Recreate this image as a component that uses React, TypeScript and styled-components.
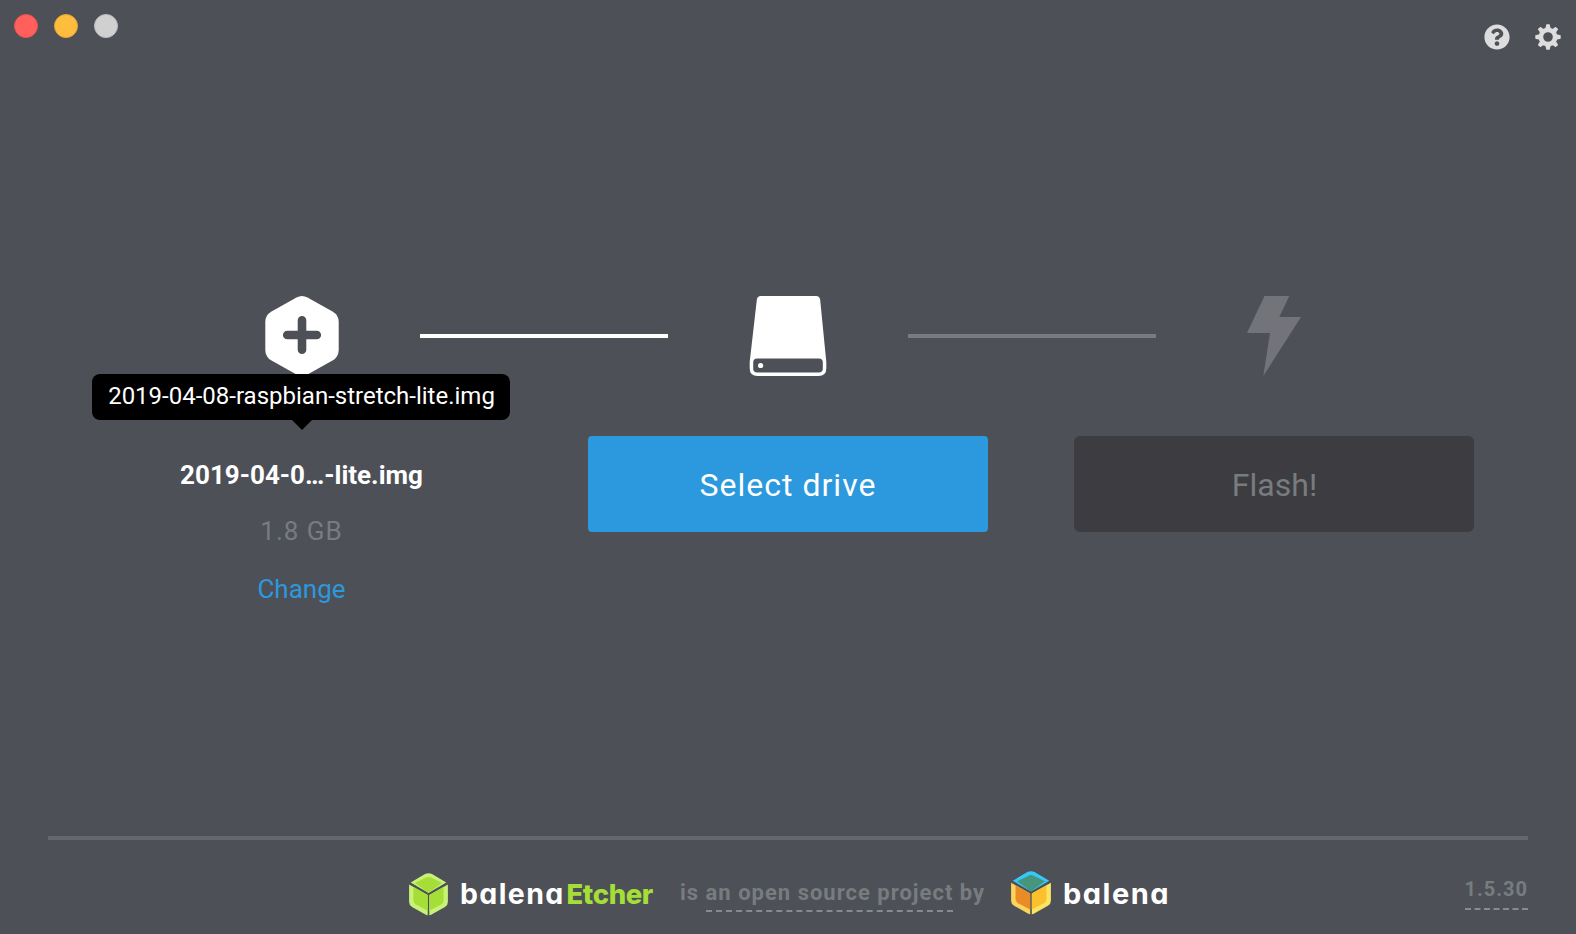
import React from "react";
import styled, { createGlobalStyle } from "styled-components";
import { FaQuestionCircle } from "react-icons/fa";

const GlobalStyle = createGlobalStyle`
  * { box-sizing: border-box; }
  body { margin: 0; background: #4d5057; }
`;

const Window = styled.div`
  width: 1576px;
  height: 934px;
  overflow: hidden;
  display: flex;
  flex-direction: column;
  background: #4d5057;
  color: #fff;
  font-family: Roboto, "Liberation Sans", sans-serif;
`;

const TitleBar = styled.header`
  height: 296px;
  display: flex;
  justify-content: space-between;
  align-items: flex-start;
  padding: 14px 15px 0 14px;
`;

const TrafficLights = styled.div`
  display: flex;
  gap: 16px;
`;

const Light = styled.span<{ $fill: string; $edge: string }>`
  width: 24px;
  height: 24px;
  border-radius: 50%;
  background: ${(p) => p.$fill};
  border: 1px solid ${(p) => p.$edge};
`;

const Tools = styled.nav`
  display: flex;
  gap: 25.5px;
  padding-top: 10px;
`;

const ToolButton = styled.button`
  display: flex;
  padding: 0;
  border: 0;
  background: none;
  color: #ddd;
  font-size: 26px;
`;

const Progress = styled.div`
  display: flex;
  align-items: center;
  height: 80px;
  padding: 0 184px;
`;

const StepIcon = styled.div<{ $width: number }>`
  width: ${(p) => p.$width}px;
  display: flex;
  justify-content: center;
`;

const Connector = styled.div<{ $active?: boolean }>`
  width: 248px;
  height: 4px;
  background: ${(p) => (p.$active ? "#fff" : "#787c7f")};
`;

const Steps = styled.main`
  display: flex;
  gap: 86px;
  height: 460px;
  padding: 60px 102px 0;
`;

const Step = styled.section`
  position: relative;
  width: 400px;
  display: flex;
  flex-direction: column;
  align-items: center;
`;

const ImageDetails = styled.div`
  display: flex;
  flex-direction: column;
  align-items: center;
  padding-right: 1px;
`;

const Tooltip = styled.div`
  position: absolute;
  top: -62px;
  left: -10px;
  width: 418px;
  height: 46px;
  padding-left: 1px;
  border-radius: 8px;
  background: #000;
  font-size: 24px;
  line-height: 44px;
  text-align: center;
  white-space: nowrap;

  &::after {
    content: "";
    position: absolute;
    top: 46px;
    left: 200px;
    border: 10px solid transparent;
    border-top-color: #000;
    border-bottom: 0;
  }
`;

const ImageName = styled.div`
  margin-top: 24px;
  font-size: 26px;
  line-height: 30px;
  font-weight: 700;
`;

const ImageSize = styled.div`
  margin-top: 26px;
  font-size: 26px;
  line-height: 30px;
  letter-spacing: 1px;
  color: #787c7f;
`;

const ChangeLink = styled.button`
  margin-top: 28px;
  padding: 0;
  border: 0;
  background: none;
  font: inherit;
  font-size: 26px;
  line-height: 30px;
  color: #2c98dd;
`;

const ActionButton = styled.button<{ $primary?: boolean }>`
  width: 400px;
  height: 96px;
  padding: 2px 0 0 ${(p) => (p.$primary ? 0 : 1)}px;
  border: 0;
  border-radius: ${(p) => (p.$primary ? 4 : 6)}px;
  font: inherit;
  font-size: 32px;
  letter-spacing: ${(p) => (p.$primary ? 1 : 0)}px;
  background: ${(p) => (p.$primary ? "#2c98dd" : "#3c3c41")};
  color: ${(p) => (p.$primary ? "#fff" : "#787c7f")};
`;

const Footer = styled.footer`
  display: grid;
  grid-template-columns: 361px 770px 1fr;
  margin: 0 48px;
  border-top: 4px solid #64686a;
`;

const Credits = styled.div`
  grid-column: 2;
  display: flex;
  align-items: flex-start;
  padding-top: 31px;
  height: 94px;
`;

const Cube = styled.svg<{ $drop?: number }>`
  flex: none;
  margin-top: ${(p) => p.$drop ?? 0}px;
`;

const Wordmark = styled.span<{ $accent?: boolean; $width: number; $gap: number; $size: number; $spacing: number }>`
  flex: none;
  width: ${(p) => p.$width}px;
  margin-left: ${(p) => p.$gap}px;
  padding-top: 6px;
  font-family: Inter, Lato, sans-serif;
  font-weight: ${(p) => (p.$accent ? 800 : 700)};
  font-size: ${(p) => p.$size}px;
  line-height: 34px;
  letter-spacing: ${(p) => p.$spacing}px;
  font-feature-settings: "cv11";
  white-space: nowrap;
  color: ${(p) => (p.$accent ? "#a5de37" : "#fff")};
`;

const Tagline = styled.span`
  flex: none;
  width: 331px;
  margin-left: 25.5px;
  padding-top: 8px;
  font-size: 22px;
  line-height: 28px;
  font-weight: 700;
  letter-spacing: 1px;
  white-space: nowrap;
  color: #787c7f;
`;

const DashedLink = styled.a`
  display: inline-block;
  height: 33px;
  border-bottom: 2px dashed #888b8d;
`;

const Version = styled.a`
  justify-self: end;
  height: 70px;
  padding-top: 35px;
  border-bottom: 2px dashed #888b8d;
  font-size: 20px;
  line-height: 28px;
  font-weight: 700;
  letter-spacing: 1px;
  color: #787c7f;
`;

const TEETH = [0, 45, 90, 135, 180, 225, 270, 315];

const GearIcon = () => (
  <svg width="26" height="26" viewBox="-13 -13 26 26">
    <circle r="7" fill="none" stroke="currentColor" strokeWidth="4.400" />
    {TEETH.map((angle) => (
      <path
        key={angle}
        transform={`rotate(${angle})`}
        fill="currentColor"
        d="M-3.900 -7.800Q-2.500 -8.600 -2.200 -10.200L-1.900 -12.100Q-1.800 -12.700 -1.200 -12.700H1.200Q1.800 -12.700 1.900 -12.100L2.200 -10.200Q2.500 -8.600 3.900 -7.800Z"
      />
    ))}
  </svg>
);

const ImageIcon = () => (
  <svg width="74" height="80" viewBox="0 0 74 80">
    <path
      fill="#fff"
      d="M31.5 1.6Q37 -1.4 42.5 1.6L67.5 15.6Q73.7 19.2 73.7 26V54Q73.7 61 67.5 64.6L42.5 78.6Q37 81.4 31.5 78.6L6.5 64.6Q.3 61 .3 54V26Q.3 19.2 6.5 15.6Z"
    />
    <path d="M37 24.2V53.8M22.2 39H51.8" stroke="#4d5057" strokeWidth="8.6" strokeLinecap="round" />
  </svg>
);

const DriveIcon = () => (
  <svg width="78" height="80" viewBox="0 0 78 80">
    <path
      fill="#fff"
      d="M12 0H67Q70.700 0 71.200 4L77.300 66V72.500Q77.300 80 69.500 80H8.500Q.7 80 .7 72.500V66L7.800 4Q8.200 0 12 0Z"
    />
    <rect x="4.200" y="62.400" width="69.600" height="14.200" rx="4" fill="#4d5057" />
    <circle cx="11.600" cy="69.500" r="2.600" fill="#fff" />
  </svg>
);

const BoltIcon = () => (
  <svg width="54" height="80" viewBox="0 0 54 80">
    <path fill="#727479" d="M17.500 0H42.300L32.300 21H54L16.300 80L23 37H0Z" />
  </svg>
);

interface CubeProps {
  width: number;
  height: number;
  drop?: number;
  edges: [string, string, string];
  faces: [string, string, string];
}

const CubeLogo = ({ width, height, drop, edges, faces }: CubeProps) => (
  <Cube $drop={drop} width={width} height={height} viewBox="0.6 0.7 38.800 42.900" preserveAspectRatio="none">
    <path fill={edges[0]} d="M2.300 10.300L16.500 1.800Q20 0 23.500 1.800L37.700 10.300L20 20.800Z" />
    <path fill={edges[1]} d="M.7 12.400L19.200 23V43.400Q18 43.300 16.500 42.400L3.600 35Q.7 33.200.7 30Z" />
    <path fill={edges[2]} d="M39.300 12.400L20.800 23V43.400Q22 43.300 23.500 42.400L36.400 35Q39.300 33.200 39.300 30Z" />
    <path fill={faces[0]} d="M6.500 10.900L17.500 5.300Q20 4.200 22.500 5.300L33.500 10.900L20 20.800Z" />
    <path fill={faces[1]} d="M5 14.900L19.200 23V38.700L7.500 32.500Q5 31 5 28.500Z" />
    <path fill={faces[2]} d="M35 14.900L20.800 23V38.700L32.500 32.500Q35 31 35 28.500Z" />
  </Cube>
);

export default function App() {
  return (
    <Window>
      <GlobalStyle />
      <TitleBar>
        <TrafficLights>
          <Light $fill="#ff605c" $edge="#e9524f" />
          <Light $fill="#ffbd3e" $edge="#e6a532" />
          <Light $fill="#d0d0d1" $edge="#bcbdbf" />
        </TrafficLights>
        <Tools>
          <ToolButton aria-label="Help"><FaQuestionCircle /></ToolButton>
          <ToolButton aria-label="Settings"><GearIcon /></ToolButton>
        </Tools>
      </TitleBar>
      <Progress>
        <StepIcon $width={236}><ImageIcon /></StepIcon>
        <Connector $active />
        <StepIcon $width={240}><DriveIcon /></StepIcon>
        <Connector />
        <StepIcon $width={236}><BoltIcon /></StepIcon>
      </Progress>
      <Steps>
        <Step>
          <Tooltip>2019-04-08-raspbian-stretch-lite.img</Tooltip>
          <ImageDetails>
            <ImageName>2019-04-0…-lite.img</ImageName>
            <ImageSize>1.8 GB</ImageSize>
            <ChangeLink>Change</ChangeLink>
          </ImageDetails>
        </Step>
        <Step>
          <ActionButton $primary>Select drive</ActionButton>
        </Step>
        <Step>
          <ActionButton disabled>Flash!</ActionButton>
        </Step>
      </Steps>
      <Footer>
        <Credits>
          <CubeLogo
            width={39}
            height={42.5}
            drop={2}
            edges={["#c8f178", "#c8f178", "#c8f178"]}
            faces={["#a5de37", "#a5de37", "#a5de37"]}
          />
          <Wordmark $width={106.5} $gap={12} $size={28.5} $spacing={1.4}>balena</Wordmark>
          <Wordmark $accent $width={88} $gap={0} $size={27.5} $spacing={-0.4}>Etcher</Wordmark>
          <Tagline>
            is <DashedLink>an open source project</DashedLink> by
          </Tagline>
          <CubeLogo
            width={40}
            height={43.5}
            edges={["#36c8fb", "#fbd45d", "#f9e564"]}
            faces={["#46967c", "#ea8c26", "#fcc02c"]}
          />
          <Wordmark $width={108} $gap={12} $size={29} $spacing={1.5}>balena</Wordmark>
        </Credits>
        <Version>1.5.30</Version>
      </Footer>
    </Window>
  );
}
